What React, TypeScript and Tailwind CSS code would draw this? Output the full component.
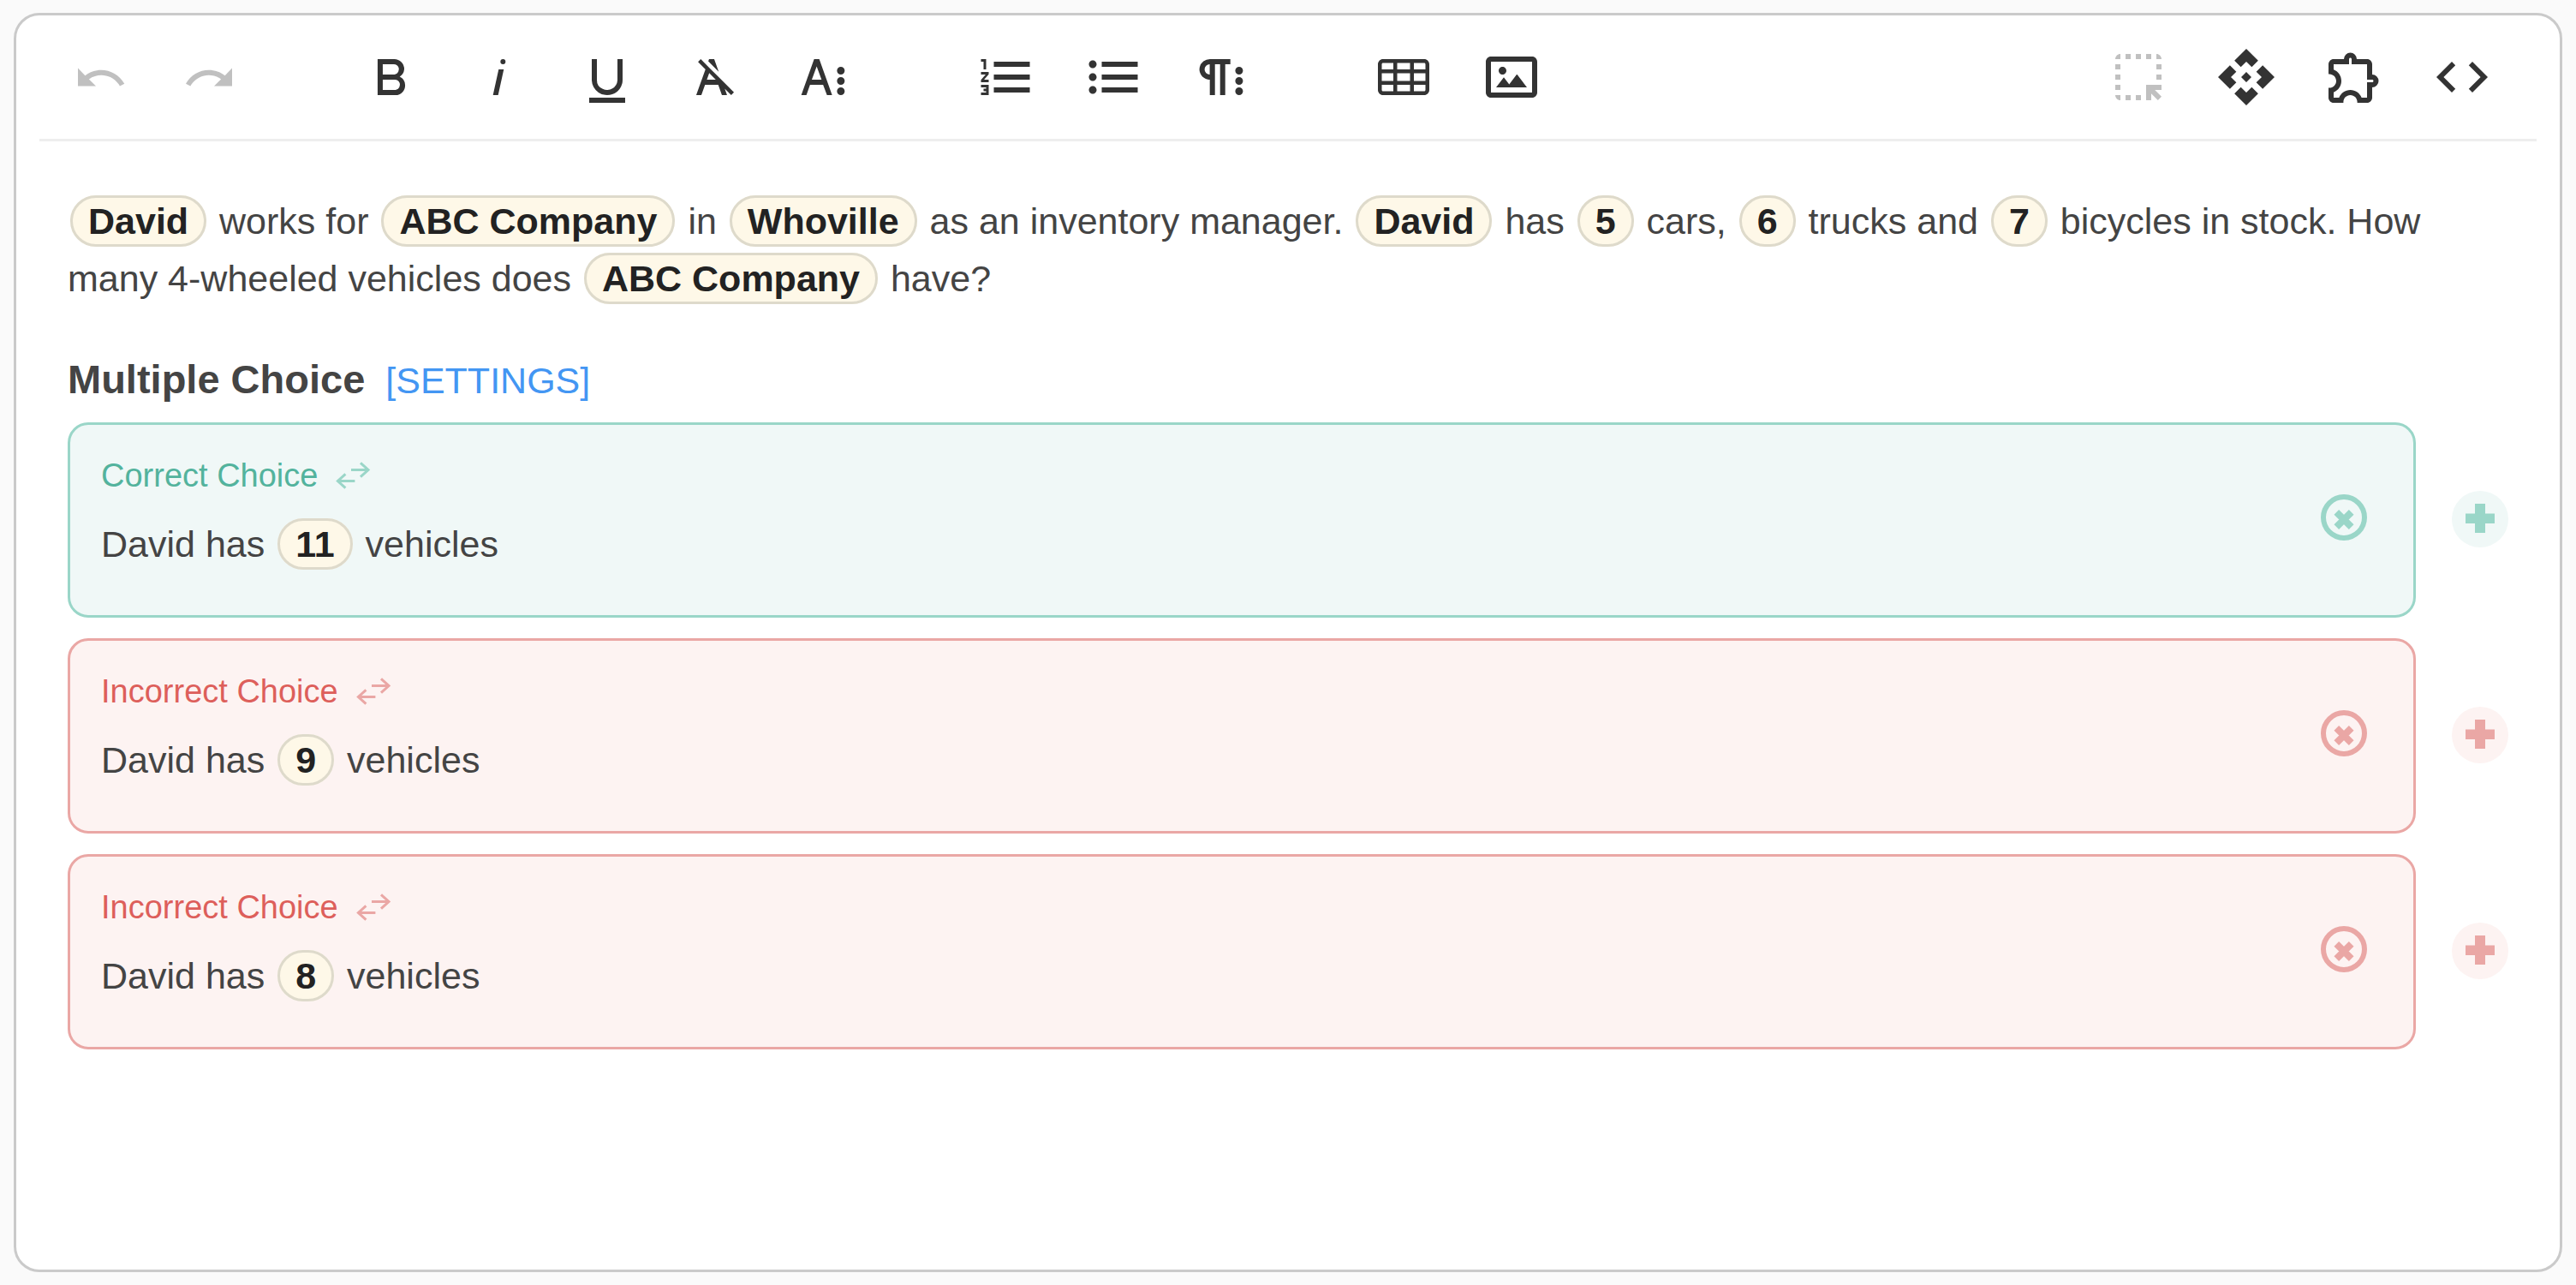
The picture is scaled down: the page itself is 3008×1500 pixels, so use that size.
import type { ReactNode } from "react";
import { MdApi, MdCode, MdHighlightAlt, MdOutlineExtension } from "react-icons/md";

const paths = {
  undo: "M10.4,9.4c-1.7,0.3-3.2,0.9-4.6,2L3,8.5v7h7l-2.7-2.7c3.7-2.6,8.8-1.8,11.5,1.9c0.2,0.3,0.4,0.5,0.5,0.8l1.8-0.9C18.9,10.8,14.7,8.7,10.4,9.4z",
  redo: "M13.6,9.4c1.7,0.3,3.2,0.9,4.6,2L21,8.5v7h-7l2.7-2.7C13,10.1,7.9,11,5.3,14.7c-0.2,0.3-0.4,0.5-0.5,0.8L3,14.6C5.1,10.8,9.3,8.7,13.6,9.4z",
  bold: "M15.25,11.8h0A3.68,3.68,0,0,0,17,9a3.93,3.93,0,0,0-3.86-4H6.65V19h7a3.74,3.74,0,0,0,3.7-3.78V15.1A3.64,3.64,0,0,0,15.25,11.8ZM8.65,7h4.2a2.09,2.09,0,0,1,2,1.3,2.09,2.09,0,0,1-1.37,2.61,2.23,2.23,0,0,1-.63.09H8.65Zm4.6,10H8.65V13h4.6a2.09,2.09,0,0,1,2,1.3,2.09,2.09,0,0,1-1.37,2.61A2.23,2.23,0,0,1,13.25,17Z",
  italic: "M11.76,9h2l-2.2,10h-2Zm1.68-4a1,1,0,1,0,1,1,1,1,0,0,0-1-1Z",
  underline: "M19,20v2H5V20Zm-3-6.785a4,4,0,0,1-5.74,3.4A3.75,3.75,0,0,1,8,13.085V5.005H6v8.21a6,6,0,0,0,8,5.44,5.851,5.851,0,0,0,4-5.65v-8H16ZM16,5v0h2V5ZM8,5H6v0H8Z",
  clear: "M11.48,10.09l-1.2-1.21L8.8,7.41,6.43,5,5.37,6.1,8.25,9,4.66,19h2l1.43-4h5.14l1.43,4h2l-.89-2.51L18.27,19l1.07-1.06L14.59,13.2ZM8.8,13l.92-2.56L12.27,13Zm.56-7.15L9.66,5h2l1.75,4.9Z",
  moreText: "M13.55,19h2l-5-14h-2l-5,14h2l1.4-4h5.1Zm-5.9-6,1.9-5.2,1.9,5.2Zm12.8,4.5a1.5,1.5,0,1,1-1.5-1.5A1.5,1.5,0,0,1,20.45,17.5Zm0-4a1.5,1.5,0,1,1-1.5-1.5A1.5,1.5,0,0,1,20.45,13.5Zm0-4A1.5,1.5,0,1,1,18.95,8,1.5,1.5,0,0,1,20.45,9.5Z",
  ordered: "M2.5,16h2v.5h-1v1h1V18h-2v1h3V15h-3Zm1-7h1V5h-2V6h1Zm-1,2H4.3L2.5,13.1V14h3V13H3.7l1.8-2.1V10h-3Zm5-5V8h14V6Zm0,12h14V16H7.5Zm0-5h14V11H7.5Z",
  unordered: "M4,10.5c-.8,0-1.5.7-1.5,1.5s.7,1.5,1.5,1.5,1.5-.7,1.5-1.5S4.8,10.5,4,10.5Zm0-5c-.8,0-1.5.7-1.5,1.5S3.2,8.5,4,8.5,5.5,7.8,5.5,7,4.8,5.5,4,5.5Zm0,10c-.8,0-1.5.7-1.5,1.5s.7,1.5,1.5,1.5,1.5-.7,1.5-1.5S4.8,15.5,4,15.5ZM7.5,6V8h14V6Zm0,12h14V16H7.5Zm0-5h14V11H7.5Z",
  paragraph: "M7.682,5a4.11,4.11,0,0,0-4.07,3.18,4,4,0,0,0,3.11,4.725h0l.027.005a3.766,3.766,0,0,0,.82.09v6h2V7h2V19h2V7h2V5ZM5.532,9a2,2,0,0,1,2-2v4A2,2,0,0,1,5.532,9Zm14.94,8.491a1.5,1.5,0,1,1-1.5-1.5A1.5,1.5,0,0,1,20.472,17.491Zm0-4a1.5,1.5,0,1,1-1.5-1.5A1.5,1.5,0,0,1,20.472,13.491Zm0-4a1.5,1.5,0,1,1-1.5-1.5A1.5,1.5,0,0,1,20.472,9.491Z",
  table: "M20,5H4C2.9,5,2,5.9,2,7v2v1.5v3V15v2c0,1.1,.9,2,2,2h16c1.1,0,2-.9,2-2v-2v-1.5v-3V9V7C22,5.9,21.1,5,20,5z M9.5,13.5v-3h5v3H9.5z M14.5,15v2.5h-5V15H14.5z M9.5,9V6.5h5V9H9.5z M3.5,7c0-.3.2-.5.5-.5h4V9H3.5V7z M3.5,10.5H8v3H3.5V10.5z M3.5,17v-2H8v2.5H4C3.7,17.5,3.5,17.3,3.5,17z M20.5,17c0,.3-.2,.5-.5,.5h-4V15h4.5V17z M20.5,13.5H16v-3h4.5V13.5z M16,9V6.5h4c.3,0,.5,.2,.5,.5v2H16z",
  image: "M14.2,11l3.8,5H6l3-3.9l2.1,2.7L14,11H14.2z M8.5,11c.8,0,1.5-.7,1.5-1.5S9.3,8,8.5,8S7,8.7,7,9.5C7,10.3,7.7,11,8.5,11z M22,6v12c0,1.1-.9,2-2,2H4c-1.1,0-2-.9-2-2V6c0-1.1,.9-2,2-2h16C21.1,4,22,4.9,22,6z M20,8.8V6H4v12h16V8.8z",
};

function Icon({ name }: { name: keyof typeof paths }) {
  return (
    <svg viewBox="0 0 24 24" className="size-[72px]" fill="currentColor" aria-hidden="true">
      <path d={paths[name]} />
    </svg>
  );
}

function ToolButton({ label, disabled, children }: { label: string; disabled?: boolean; children: ReactNode }) {
  return (
    <button
      type="button"
      aria-label={label}
      title={label}
      disabled={disabled}
      className="flex h-[144px] w-[126px] items-center justify-center text-[#333333] disabled:opacity-30"
    >
      {children}
    </button>
  );
}

function Group({ children }: { children: ReactNode }) {
  return <div className="flex">{children}</div>;
}

function Toolbar() {
  return (
    <div role="toolbar" aria-label="Editor" className="mx-[27px] flex justify-between border-b-3 border-[#eeeeee] pr-6 pl-[9px]">
      <div className="flex gap-[87px]">
        <Group>
          <ToolButton label="Undo" disabled><Icon name="undo" /></ToolButton>
          <ToolButton label="Redo" disabled><Icon name="redo" /></ToolButton>
        </Group>
        <Group>
          <ToolButton label="Bold"><Icon name="bold" /></ToolButton>
          <ToolButton label="Italic"><Icon name="italic" /></ToolButton>
          <ToolButton label="Underline"><Icon name="underline" /></ToolButton>
          <ToolButton label="Clear formatting"><Icon name="clear" /></ToolButton>
          <ToolButton label="More text"><Icon name="moreText" /></ToolButton>
        </Group>
        <Group>
          <ToolButton label="Ordered list"><Icon name="ordered" /></ToolButton>
          <ToolButton label="Unordered list"><Icon name="unordered" /></ToolButton>
          <ToolButton label="More paragraph"><Icon name="paragraph" /></ToolButton>
        </Group>
        <Group>
          <ToolButton label="Insert table"><Icon name="table" /></ToolButton>
          <ToolButton label="Insert image"><Icon name="image" /></ToolButton>
        </Group>
      </div>
      <Group>
        <ToolButton label="Select area" disabled><MdHighlightAlt className="size-[72px]" /></ToolButton>
        <ToolButton label="Variables"><MdApi className="size-[72px]" /></ToolButton>
        <ToolButton label="Extensions"><MdOutlineExtension className="size-[72px]" /></ToolButton>
        <ToolButton label="Code view"><MdCode className="size-[72px]" /></ToolButton>
      </Group>
    </div>
  );
}

function Pill({ children }: { children: ReactNode }) {
  return (
    <span className="mx-[3px] rounded-full border-3 border-[#dedacb] bg-[#fef8e8] px-[18px] py-[3px] font-bold whitespace-nowrap text-[#222222]">
      {children}
    </span>
  );
}

const tones = {
  correct: {
    card: "border-[#9ad6c8] bg-[#f0f8f7]",
    label: "text-[#53b39d]",
    icon: "text-[#9ad6c8]",
    add: "bg-[#f0f8f7] text-[#9ad6c8]",
  },
  incorrect: {
    card: "border-[#eaa7a5] bg-[#fdf3f2]",
    label: "text-[#dd5f5b]",
    icon: "text-[#eaa7a5]",
    add: "bg-[#fdf3f2] text-[#eaa7a5]",
  },
};

function Choice({ correct, value }: { correct?: boolean; value: string }) {
  const tone = correct ? tones.correct : tones.incorrect;
  return (
    <li className="flex items-center gap-[42px]">
      <div className={`flex flex-1 items-center rounded-3xl border-3 pr-[54px] pl-9 ${tone.card}`}>
        <div className="flex-1 pt-[30px] pb-[49px]">
          <div className="flex items-center gap-5">
            <span className={`text-[38px] leading-[58px] ${tone.label}`}>{correct ? "Correct Choice" : "Incorrect Choice"}</span>
            <button type="button" aria-label="Toggle correctness" className={tone.icon}>
              <svg viewBox="0 0 42 32" className="h-8 w-[42px]" fill="none" stroke="currentColor" strokeWidth="3">
                <path d="M19 9.5H39M30 1.3L39 9.5L30 17.7M23.4 22.5H3.4M12.4 14.3L3.4 22.5L12.4 30.7" />
              </svg>
            </button>
          </div>
          <p className="mt-[18px]">
            David has <Pill>{value}</Pill> vehicles
          </p>
        </div>
        <button type="button" aria-label="Remove choice" className={`mb-[6px] ${tone.icon}`}>
          <svg viewBox="0 0 54 54" className="size-[54px]" fill="none" stroke="currentColor">
            <circle cx="27" cy="27" r="24" strokeWidth="6" />
            <path d="M18.3 20.8L35.7 38.2M35.7 20.8L18.3 38.2" strokeWidth="8" />
          </svg>
        </button>
      </div>
      <button type="button" aria-label="Add choice" className={`mb-[2px] rounded-full ${tone.add}`}>
        <svg viewBox="0 0 66 66" className="size-[66px]" fill="currentColor">
          <path d="M27 15H39V26.5H50V38H39V49H27V38H16V26.5H27Z" />
        </svg>
      </button>
    </li>
  );
}

export default function App() {
  return (
    <div className="flex min-h-screen bg-[#fafafa] px-4 py-[15px] font-['Liberation_Sans',Arial,sans-serif]">
      <main className="flex-1 rounded-[30px] border-3 border-[#cacaca] bg-white">
        <Toolbar />
        <div className="px-[60px] py-[60px] text-[43px] leading-[67px] text-[#444444]">
          <p>
            <Pill>David</Pill> works for <Pill>ABC Company</Pill> in <Pill>Whoville</Pill> as an inventory manager.{" "}
            <Pill>David</Pill> has <Pill>5</Pill> cars, <Pill>6</Pill> trucks and <Pill>7</Pill> bicycles in stock. How
            many 4-wheeled vehicles does <Pill>ABC Company</Pill> have?
          </p>
          <div className="mt-[50px] flex items-baseline gap-6">
            <h2 className="text-[47px] font-bold">Multiple Choice</h2>
            <button type="button" className="text-[#4396f3]">[SETTINGS]</button>
          </div>
          <ul className="mt-[15px] flex flex-col gap-6">
            <Choice correct value="11" />
            <Choice value="9" />
            <Choice value="8" />
          </ul>
        </div>
      </main>
    </div>
  );
}
